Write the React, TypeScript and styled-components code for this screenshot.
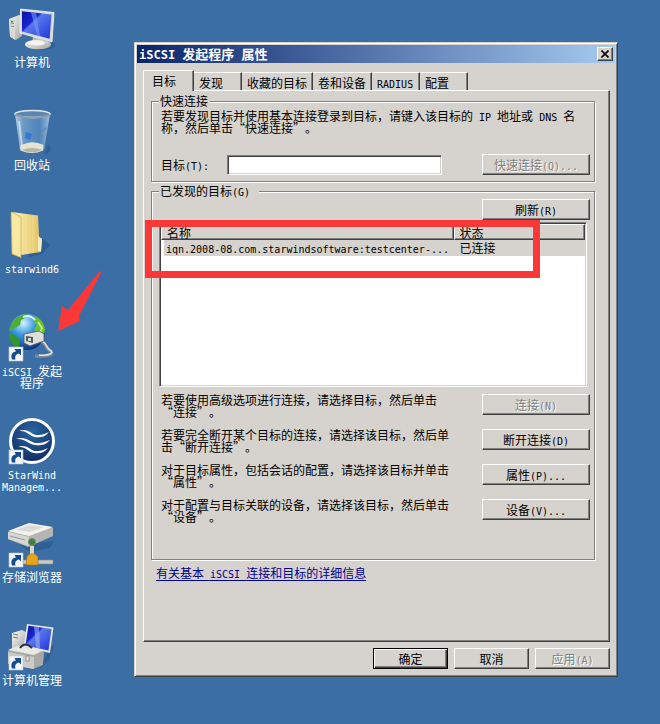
import React from 'react';
import styled, { createGlobalStyle, css } from 'styled-components';

const FACE = '#d6d3ce';
const SHADOW = '#808080';
const DARK = '#404040';
const RED = '#fb3838';

const GlobalStyle = createGlobalStyle`
  * { box-sizing: border-box; }
  body {
    margin: 0;
    background: #3a6ea5;
    color: #000;
    font: 12px/12px "Noto Sans CJK SC", "Liberation Sans", sans-serif;
    text-spacing-trim: space-all;
  }
  button, input { font: inherit; color: inherit; border-radius: 0; }
`;

const Narrow = styled.span<{ $bold?: boolean }>`
  font-family: "DejaVu Sans Mono", "Liberation Mono", monospace;
  font-size: ${(p) => (p.$bold ? 12 : 10)}px;
  line-height: 0;
  white-space: pre-wrap;
`;

/* Latin runs are set in a half-width face next to full-width Chinese. */
function Text({ children, bold }: { children: string; bold?: boolean }) {
  return (
    <>
      {children.split(/([\x20-\x7e]+)/).map((run, i) =>
        i % 2 ? <Narrow key={i} $bold={bold}>{run}</Narrow> : run,
      )}
    </>
  );
}

const Desktop = styled.main`
  display: flex;
  align-items: flex-start;
  min-height: 100vh;
  padding-right: 42px;
`;

const IconColumn = styled.nav`
  flex: none;
  width: 64px;
  margin-right: 70px;
  padding-top: 6px;
`;

const Shortcut = styled.a`
  position: relative;
  display: flex;
  flex-direction: column;
  align-items: center;
  gap: 2px;
  height: 103px;
  color: #fff;
  text-align: center;
  text-decoration: none;
`;

const Caption = styled.span`
  display: block;
`;

const CaptionLine = styled.span`
  display: block;
  white-space: nowrap;
`;

const Glyph = styled.svg`
  display: block;
  flex: none;
  overflow: visible;
`;

const Pointer = styled.svg`
  position: absolute;
  left: 56px;
  top: -45px;
`;

const Dialog = styled.section`
  flex: 1;
  min-width: 0;
  margin-top: 42px;
  padding: 2px;
  background: ${FACE};
  border: 1px solid;
  border-color: ${FACE} ${DARK} ${DARK} ${FACE};
  box-shadow: inset 1px 1px 0 #fff, inset -1px -1px 0 ${SHADOW};
`;

const TitleBar = styled.header`
  display: flex;
  align-items: center;
  justify-content: space-between;
  height: 18px;
  padding: 0 2px;
  background: linear-gradient(90deg, #0a246a, #a6caf0);
`;

const Title = styled.h1`
  margin: 0;
  color: #fff;
  font-size: 13px;
  line-height: 18px;
  font-weight: 700;
`;

const raised = css`
  background: ${FACE};
  border: 1px solid;
  border-color: #fff ${DARK} ${DARK} #fff;
  box-shadow: inset -1px -1px 0 ${SHADOW};
`;

const CloseButton = styled.button`
  ${raised}
  display: grid;
  place-items: center;
  width: 16px;
  height: 14px;
  padding: 0;
`;

const Body = styled.div`
  padding: 7px 5px 5px 6px;
`;

const TabList = styled.div`
  display: flex;
  align-items: flex-end;
  height: 20px;
`;

const Tab = styled.button<{ $active?: boolean }>`
  position: relative;
  z-index: ${(p) => (p.$active ? 1 : 0)};
  min-width: ${(p) => (p.$active ? 51 : 48)}px;
  height: ${(p) => (p.$active ? 21 : 18)}px;
  margin-bottom: ${(p) => (p.$active ? -1 : 0)}px;
  padding: ${(p) => (p.$active ? '0 8px 1px' : '2px 5px 0')};
  background: ${FACE};
  border: solid;
  border-width: 1px 1px 0 ${(p) => (p.$active ? 1 : 0)}px;
  border-color: #fff ${DARK} ${FACE} #fff;
  box-shadow: inset -1px 0 0 ${SHADOW};
  text-align: left;
  white-space: nowrap;
`;

const Panel = styled.div`
  padding: 4px 14px 62px 7px;
  border: 1px solid;
  border-color: #fff ${DARK} ${DARK} #fff;
  box-shadow: inset -1px -1px 0 ${SHADOW};
`;

const Group = styled.fieldset<{ $bottom: number }>`
  min-width: 0;
  margin: 0 0 3px;
  padding: 2px 4px ${(p) => p.$bottom}px 7px;
  border: 1px solid ${SHADOW};
  box-shadow: 1px 1px 0 #fff, inset 1px 1px 0 #fff;
`;

const Legend = styled.legend<{ $wide?: boolean }>`
  height: 12px;
  padding: 0 ${(p) => (p.$wide ? 9 : 2)}px 0 1px;
  background: ${FACE};
`;

const Intro = styled.p`
  margin: 1px 0 20px;
  padding: 0 5px 0 2px;
`;

const FieldRow = styled.div`
  display: flex;
  align-items: center;
`;

const FieldLabel = styled.label`
  flex: none;
  width: 68px;
  padding-left: 2px;
`;

const TextField = styled.input`
  flex: 1;
  min-width: 0;
  height: 20px;
  margin-right: 40px;
  padding: 0 4px;
  background: #fff;
  border: 1px solid;
  border-color: ${SHADOW} #fff #fff ${SHADOW};
  box-shadow: inset 1px 1px 0 ${DARK}, inset -1px -1px 0 ${FACE};
`;

const Button = styled.button<{ $small?: boolean; $primary?: boolean }>`
  ${raised}
  flex: none;
  width: ${(p) => (p.$small ? 75 : 108)}px;
  height: 21px;
  padding: 0;
  white-space: nowrap;
  ${(p) =>
    p.$primary &&
    css`
      border-color: #000;
      box-shadow: inset 1px 1px 0 #fff, inset -1px -1px 0 ${DARK}, inset -2px -2px 0 ${SHADOW};
    `}
  &:disabled {
    color: ${SHADOW};
    text-shadow: 1px 1px 0 #fff;
  }
`;

const Toolbar = styled.div`
  display: flex;
  justify-content: flex-end;
`;

const ListBox = styled.div`
  position: relative;
  height: 165px;
  margin: 2px 3px 7px 0;
  background: #fff;
  border: 1px solid;
  border-color: ${SHADOW} #fff #fff ${SHADOW};
  box-shadow: inset 1px 1px 0 ${DARK}, inset -1px -1px 0 ${FACE};
  padding: 1px;
`;

const Table = styled.table`
  width: 100%;
  table-layout: fixed;
  border-collapse: separate;
  border-spacing: 0;
`;

const HeadCell = styled.th<{ $width: string }>`
  ${raised}
  width: ${(p) => p.$width};
  height: 16px;
  padding: 1px 5px 0;
  font-weight: 400;
  line-height: 12px;
  text-align: left;
`;

const Cell = styled.td<{ $first?: boolean }>`
  height: 16px;
  padding: 0 0 0 ${(p) => (p.$first ? 2 : 6)}px;
  border-left: ${(p) => (p.$first ? '3px solid #fff' : '0')};
  background: ${FACE};
  line-height: 12px;
  white-space: nowrap;
`;

const Highlight = styled.div`
  position: absolute;
  left: -15px;
  right: 46px;
  top: -3px;
  height: 58px;
  border: 7px solid ${RED};
  pointer-events: none;
`;

const Actions = styled.div`
  display: grid;
  gap: 11px;
`;

const ActionRow = styled.div`
  display: flex;
  align-items: flex-start;
  justify-content: space-between;
`;

const Hint = styled.p`
  margin: 0;
  padding: 0 28px 0 2px;
`;

const HelpLink = styled.a`
  display: inline-block;
  margin: 4px 0 0 5px;
  color: #000090;
  text-decoration: underline;
  text-underline-offset: 2px;
`;

const Footer = styled.footer`
  display: flex;
  justify-content: flex-end;
  gap: 6px;
  padding-top: 6px;
`;

const Badge = () => (
  <g>
    <rect x="1" y="32" width="14" height="14" fill="#f4f6fa" stroke="#b9c4d4" strokeWidth=".6" />
    <path d="M4 44.500c-1.500-4.500 0-7.500 4-8l-1.500-2.500h6.500v6.500l-2-2c-3 .5-4.500 2.500-3.500 6z" fill="#164a94" />
  </g>
);

const Defs = () => (
  <defs>
    <linearGradient id="screen" x1="0" y1="0" x2="1" y2="1">
      <stop offset="0" stopColor="#0a14a0" />
      <stop offset=".35" stopColor="#1626d4" />
      <stop offset=".4" stopColor="#5a78ec" />
      <stop offset="1" stopColor="#1c34d8" />
    </linearGradient>
    <linearGradient id="metal" x1="0" y1="0" x2="1" y2="1">
      <stop offset="0" stopColor="#fbfbf8" />
      <stop offset="1" stopColor="#a5a6a2" />
    </linearGradient>
    <linearGradient id="glass" x1="0" x2="1">
      <stop offset="0" stopColor="#dceaf4" stopOpacity=".75" />
      <stop offset=".25" stopColor="#86b4dc" stopOpacity=".6" />
      <stop offset=".7" stopColor="#5a94cc" stopOpacity=".6" />
      <stop offset="1" stopColor="#cfe0ee" stopOpacity=".7" />
    </linearGradient>
    <linearGradient id="folder" x1="0" x2="1">
      <stop offset="0" stopColor="#fbf0b4" />
      <stop offset="1" stopColor="#e3c25f" />
    </linearGradient>
    <radialGradient id="ocean" cx=".4" cy=".25" r=".8">
      <stop offset="0" stopColor="#d8f2ff" />
      <stop offset=".4" stopColor="#3b9be4" />
      <stop offset="1" stopColor="#082a78" />
    </radialGradient>
    <radialGradient id="disc" cx=".5" cy=".3" r=".8">
      <stop offset="0" stopColor="#2c66a4" />
      <stop offset="1" stopColor="#0a2458" />
    </radialGradient>
  </defs>
);

const Computer = () => (
  <>
    <ellipse cx="33" cy="39" rx="14" ry="5" fill="#234a78" opacity=".4" />
    <path d="M1 13 11 9l3 1v20l-6 4-6-3.500z" fill="url(#metal)" />
    <path d="M1 13l6 1.500V34l-5-3.500z" fill="#d9dad5" />
    <path d="M3 17l3 .6M3 20l3 .6" stroke="#777" strokeWidth=".8" />
    <circle cx="4" cy="15.500" r="1" fill="#1d9c48" />
    <path d="M25 30l9 2-1 6h-9z" fill="#b8b9b5" />
    <ellipse cx="30" cy="38.500" rx="13" ry="4.800" fill="url(#metal)" />
    <ellipse cx="29" cy="37" rx="8" ry="2.500" fill="#f4f4f0" />
    <path d="M12.500 3 46 6.500 44 36 12 27z" fill="#d8d9d4" stroke="#f4f4f0" strokeWidth=".8" />
    <path d="M14 5.200 43.500 8.600 41.600 32.800 14 25.500z" fill="url(#screen)" />
    <path d="M23 6.200l5 .6 4 23.500-3-.8z" fill="#7c98f2" opacity=".6" />
  </>
);

const RecycleBin = () => (
  <>
    <path d="M36 44l5-9 2 6-5 5z" fill="#1d4270" opacity=".35" />
    <path d="M7 5l5 36q12 5.500 24 0L42 5z" fill="url(#glass)" />
    <path d="M12 37q12-7 23.500-1L35 41.500q-11 5-22.500 0z" fill="#e4e2d4" />
    <path d="M14 41q10-4 20 0-10 4.500-20 0z" fill="#b9b39c" />
    <path d="M18 23l6 2-2 6-5-2z" fill="#2970d8" opacity=".8" />
    <path d="M30 26l8-7M29 30l4-4" stroke="#5d86ae" strokeWidth="1.500" />
    <path d="M11 12l3 25" stroke="#eaf4fb" strokeWidth="2" opacity=".6" />
    <ellipse cx="24.500" cy="5" rx="17.500" ry="3.600" fill="#5c86ae" stroke="#dfe8ee" strokeWidth="1.500" />
    <path d="M7 6q17.500 6.500 35 0" fill="none" stroke="#8c9ca8" strokeWidth="2" />
  </>
);

const Folder = () => (
  <>
    <path d="M30 24l12 9-8 9-14 3z" fill="#1f4674" opacity=".4" />
    <path d="M4 0l26 3.500 1 21.500 3 2-1 13-20 3z" fill="url(#folder)" />
    <path d="M30 24l4 3-1 12h-3z" fill="#f5edc0" />
    <path d="M18 3v38M25 4v36" stroke="#f7e69c" strokeWidth="1" opacity=".6" />
    <path d="M3 0l10 5v40.500L4 42z" fill="#f8e8a2" stroke="#cfae55" strokeWidth=".7" />
  </>
);

const Globe = () => (
  <>
    <circle cx="19" cy="17" r="18" fill="url(#ocean)" />
    <path d="M4 8C8 2 14-1 20-1l-3 4-4 2-1 5-5 3-4 3-2-1z" fill="#4cae35" />
    <path d="M1 18l6 2 5 5-1 7-4 0C3 28 1 24 1 18z" fill="#34962c" />
    <path d="M27 1c7 3 10 9 10 15l-3 7-5-3-3-6 3-4-4-4z" fill="#62c238" />
    <path d="M30 7l4 6-2 5" fill="none" stroke="#d3ec6b" strokeWidth="2" />
    <path d="M15 2q7-3 12 3" fill="none" stroke="#fff" strokeWidth="2" opacity=".8" />
    <path d="M33 27c5 0 5 7 9 9 6 3-2 6-15 5" fill="none" stroke="#828c92" strokeWidth="3" />
    <path d="M33 26c5 0 5 7 9 9 5 3-1 6-11 5" fill="none" stroke="#dfe3e2" strokeWidth="1.500" />
    <path d="M16 19l15-3 5 3v7l-14 5-6-3z" fill="#dedfdb" stroke="#555" strokeWidth=".8" />
    <path d="M18 21l7 1v6l-7-2z" fill="#51575e" />
    <path d="M20 23h3v3h-3z" fill="#d8dad6" />
    <Badge />
  </>
);

const StarWind = () => (
  <>
    <circle cx="24" cy="23" r="21.500" fill="url(#disc)" stroke="#fff" strokeWidth="3" />
    <path d="M11 13c9-4 13 5 19 4 5 0 8-2 11-3-4 5-9 6-14 5-6-1-8-7-16-6z" fill="#fff" />
    <path d="M8 21c10-4 15 5 22 4 5 0 8-2 12-3-4 5-10 6-15 5-7-1-10-7-19-6z" fill="#fff" />
    <path d="M10 29c9-4 13 5 19 4 5 0 8-2 11-3-4 5-9 6-14 5-6-1-8-7-16-6z" fill="#fff" />
    <Badge />
  </>
);

const Storage = () => (
  <>
    <path d="M12 24l34-4-4 7-20 4z" fill="#1f4674" opacity=".35" />
    <path d="M0 11 21 3l24 4v8L20 26 0 18z" fill="#b5b6b2" />
    <path d="M0 10 21 2l24 4-24 9z" fill="#f2f2ee" />
    <path d="M0 11l21 5v9L0 18z" fill="#d6d7d3" />
    <path d="M8 9l14-5 14 2-14 5z" fill="#dadbd6" />
    <path d="M2 15l15 4" stroke="#9a9b98" strokeWidth="1" />
    <circle cx="24" cy="21" r="3.600" fill="#39843a" stroke="#7f877c" strokeWidth="1" />
    <path d="M22 25h4v9h-4z" fill="#d7d6ce" />
    <path d="M15 39h30v4H15z" fill="#c9c9c3" stroke="#898982" strokeWidth=".6" />
    <path d="M19 35l3-2h5l3 3v8H18z" fill="#e7a51f" stroke="#a66b10" strokeWidth=".6" />
    <Badge />
  </>
);

const Management = () => (
  <>
    <path d="M32 44l9-8 6-16-6 5z" fill="#1f4674" opacity=".35" />
    <path d="M4 9l10-3 4 2v18H4z" fill="url(#metal)" />
    <path d="M5 10l5 1M5 13l5 1" stroke="#777" strokeWidth="1" />
    <path d="M19 0 45.500 3.500 42 29 15.500 23z" fill="#e3e4df" />
    <path d="M20.500 1.800 43.500 5 40.500 26.500 17.500 21.500z" fill="url(#screen)" />
    <path d="M26 2.500l5 .7 1 21-4-.7z" fill="#9db0f5" opacity=".6" />
    <path d="M0 27l9-5 27 5-1 14-10 4-25-5z" fill="#a9aaa6" />
    <path d="M0 26l9-4 27 4-10 5z" fill="#e9e9e4" />
    <path d="M0 28l26 5v12L0 40z" fill="#cbccc7" />
    <path d="M12 24q5-7 12 0" fill="none" stroke="#30343a" strokeWidth="2" />
    <rect x="18" y="32" width="3" height="5" fill="#e9e9e4" stroke="#666" strokeWidth=".6" />
    <Badge />
  </>
);

const shortcuts = [
  { lines: ['计算机'], Art: Computer },
  { lines: ['回收站'], Art: RecycleBin },
  { lines: ['starwind6'], Art: Folder },
  { lines: ['iSCSI 发起', '程序'], Art: Globe, pointed: true },
  { lines: ['StarWind', 'Managem...'], Art: StarWind },
  { lines: ['存储浏览器'], Art: Storage },
  { lines: ['计算机管理'], Art: Management },
];

const tabs = ['目标', '发现', '收藏的目标', '卷和设备', 'RADIUS', '配置'];

const actions = [
  { hint: '若要使用高级选项进行连接，请选择目标，然后单击“连接”。', label: '连接(N)', disabled: true },
  { hint: '若要完全断开某个目标的连接，请选择该目标，然后单击“断开连接”。', label: '断开连接(D)' },
  { hint: '对于目标属性，包括会话的配置，请选择该目标并单击“属性”。', label: '属性(P)...' },
  { hint: '对于配置与目标关联的设备，请选择该目标，然后单击“设备”。', label: '设备(V)...' },
];

export default function App() {
  return (
    <Desktop lang="zh-CN">
      <GlobalStyle />
      <IconColumn aria-label="桌面">
        {shortcuts.map(({ lines, Art, pointed }) => (
          <Shortcut href="#" key={lines[0]}>
            <Glyph width="48" height="48" viewBox="0 0 48 48" aria-hidden="true">
              <Defs />
              <Art />
            </Glyph>
            <Caption>
              {lines.map((line) => (
                <CaptionLine key={line}><Text>{line}</Text></CaptionLine>
              ))}
            </Caption>
            {pointed && (
              <Pointer width="48" height="62" viewBox="0 0 48 62" aria-hidden="true">
                <path d="M2 61 6 36l6 4L43 2l3-1-23 45 1 5z" fill={RED} />
              </Pointer>
            )}
          </Shortcut>
        ))}
      </IconColumn>

      <Dialog role="dialog" aria-labelledby="dialog-title">
        <TitleBar>
          <Title id="dialog-title"><Text bold>iSCSI 发起程序 属性</Text></Title>
          <CloseButton aria-label="关闭">
            <svg width="8" height="8" viewBox="0 0 8 8" aria-hidden="true">
              <path d="M0.500 0.500l7 7M7.500 0.500l-7 7" stroke="#000" strokeWidth="1.600" />
            </svg>
          </CloseButton>
        </TitleBar>
        <Body>
          <TabList role="tablist">
            {tabs.map((tab, i) => (
              <Tab key={tab} role="tab" aria-selected={i === 0} $active={i === 0}>
                <Text>{tab}</Text>
              </Tab>
            ))}
          </TabList>
          <Panel role="tabpanel">
            <Group $bottom={6}>
              <Legend>快速连接</Legend>
              <Intro>
                <Text>若要发现目标并使用基本连接登录到目标，请键入该目标的 IP 地址或 DNS 名称，然后单击“快速连接”。</Text>
              </Intro>
              <FieldRow>
                <FieldLabel htmlFor="target"><Text>目标(T):</Text></FieldLabel>
                <TextField id="target" type="text" />
                <Button disabled><Text>快速连接(Q)...</Text></Button>
              </FieldRow>
            </Group>

            <Group $bottom={36}>
              <Legend $wide><Text>已发现的目标(G)</Text></Legend>
              <Toolbar>
                <Button><Text>刷新(R)</Text></Button>
              </Toolbar>
              <ListBox>
                <Table>
                  <thead>
                    <tr>
                      <HeadCell $width="69%">名称</HeadCell>
                      <HeadCell $width="31%">状态</HeadCell>
                    </tr>
                  </thead>
                  <tbody>
                    <tr>
                      <Cell $first><Text>iqn.2008-08.com.starwindsoftware:testcenter-...</Text></Cell>
                      <Cell>已连接</Cell>
                    </tr>
                  </tbody>
                </Table>
                <Highlight />
              </ListBox>
              <Actions>
                {actions.map(({ hint, label, disabled }) => (
                  <ActionRow key={label}>
                    <Hint><Text>{hint}</Text></Hint>
                    <Button disabled={disabled}><Text>{label}</Text></Button>
                  </ActionRow>
                ))}
              </Actions>
            </Group>
            <HelpLink href="#"><Text>有关基本 iSCSI 连接和目标的详细信息</Text></HelpLink>
          </Panel>
          <Footer>
            <Button $small $primary>确定</Button>
            <Button $small>取消</Button>
            <Button $small disabled><Text>应用(A)</Text></Button>
          </Footer>
        </Body>
      </Dialog>
    </Desktop>
  );
}
